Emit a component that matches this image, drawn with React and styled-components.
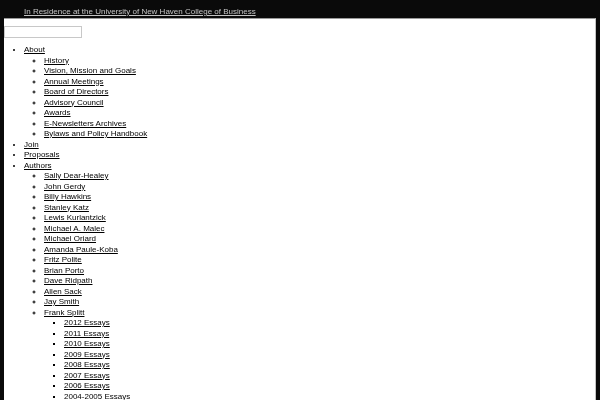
import React from "react"
import styled, { createGlobalStyle } from "styled-components"

const GlobalStyle = createGlobalStyle`
  html, body {
    margin: 0;
    padding: 0;
    background: #0a0a0a;
  }
  body {
    font-family: "Liberation Sans", Arial, sans-serif;
    font-size: 8px;
    line-height: 10.5px;
    -webkit-font-smoothing: antialiased;
  }
  #root {
    filter: grayscale(1);
  }
`

const TopBar = styled.div`
  height: 18px;
  box-sizing: border-box;
  padding: 7px 0 0 24px;
`

const TopLink = styled.a`
  &, &:link, &:visited {
    color: #c4c4c4;
    text-decoration: underline;
  }
`

const Panel = styled.div`
  margin: 0 4px;
  min-height: 400px;
  background: #fff;
  border-top: 1px solid #9a9a9a;
  border-right: 1px solid #c4c4c4;
  padding-top: 7px;
`

const Search = styled.input`
  display: block;
  box-sizing: border-box;
  width: 78px;
  height: 12px;
  margin: 0;
  padding: 0;
  border: 1px solid #c8c8c8;
  outline: none;
`

const Menu = styled.ul`
  margin: ${p => (p.$top ? "7px 0 0" : "0")};
  padding-left: 20px;
  list-style-type: ${p => p.$bullet};
`

const Item = styled.li`
  color: #000;
`

const Link = styled.a`
  &, &:link, &:visited {
    color: #000;
    text-decoration: underline;
  }
`

const about = [
  "History",
  "Vision, Mission and Goals",
  "Annual Meetings",
  "Board of Directors",
  "Advisory Council",
  "Awards",
  "E-Newsletters Archives",
  "Bylaws and Policy Handbook",
]

const authors = [
  "Sally Dear-Healey",
  "John Gerdy",
  "Billy Hawkins",
  "Stanley Katz",
  "Lewis Kurlantzick",
  "Michael A. Malec",
  "Michael Oriard",
  "Amanda Paule-Koba",
  "Fritz Polite",
  "Brian Porto",
  "Dave Ridpath",
  "Allen Sack",
  "Jay Smith",
]

const essays = [
  "2012 Essays",
  "2011 Essays",
  "2010 Essays",
  "2009 Essays",
  "2008 Essays",
  "2007 Essays",
  "2006 Essays",
  "2004-2005 Essays",
]

const Sub = ({ items, bullet }) => (
  <Menu $bullet={bullet}>
    {items.map(name => (
      <Item key={name}>
        <Link href="#">{name}</Link>
      </Item>
    ))}
  </Menu>
)

const App = () => (
  <>
    <GlobalStyle />
    <TopBar>
      <TopLink href="#">In Residence at the University of New Haven College of Business</TopLink>
    </TopBar>
    <Panel>
      <Search type="text" />
      <Menu $top $bullet="disc">
        <Item>
          <Link href="#">About</Link>
          <Sub items={about} bullet="circle" />
        </Item>
        <Item><Link href="#">Join</Link></Item>
        <Item><Link href="#">Proposals</Link></Item>
        <Item>
          <Link href="#">Authors</Link>
          <Menu $bullet="circle">
            {authors.map(name => (
              <Item key={name}><Link href="#">{name}</Link></Item>
            ))}
            <Item>
              <Link href="#">Frank Splitt</Link>
              <Sub items={essays} bullet="square" />
            </Item>
          </Menu>
        </Item>
      </Menu>
    </Panel>
  </>
)

export default App
